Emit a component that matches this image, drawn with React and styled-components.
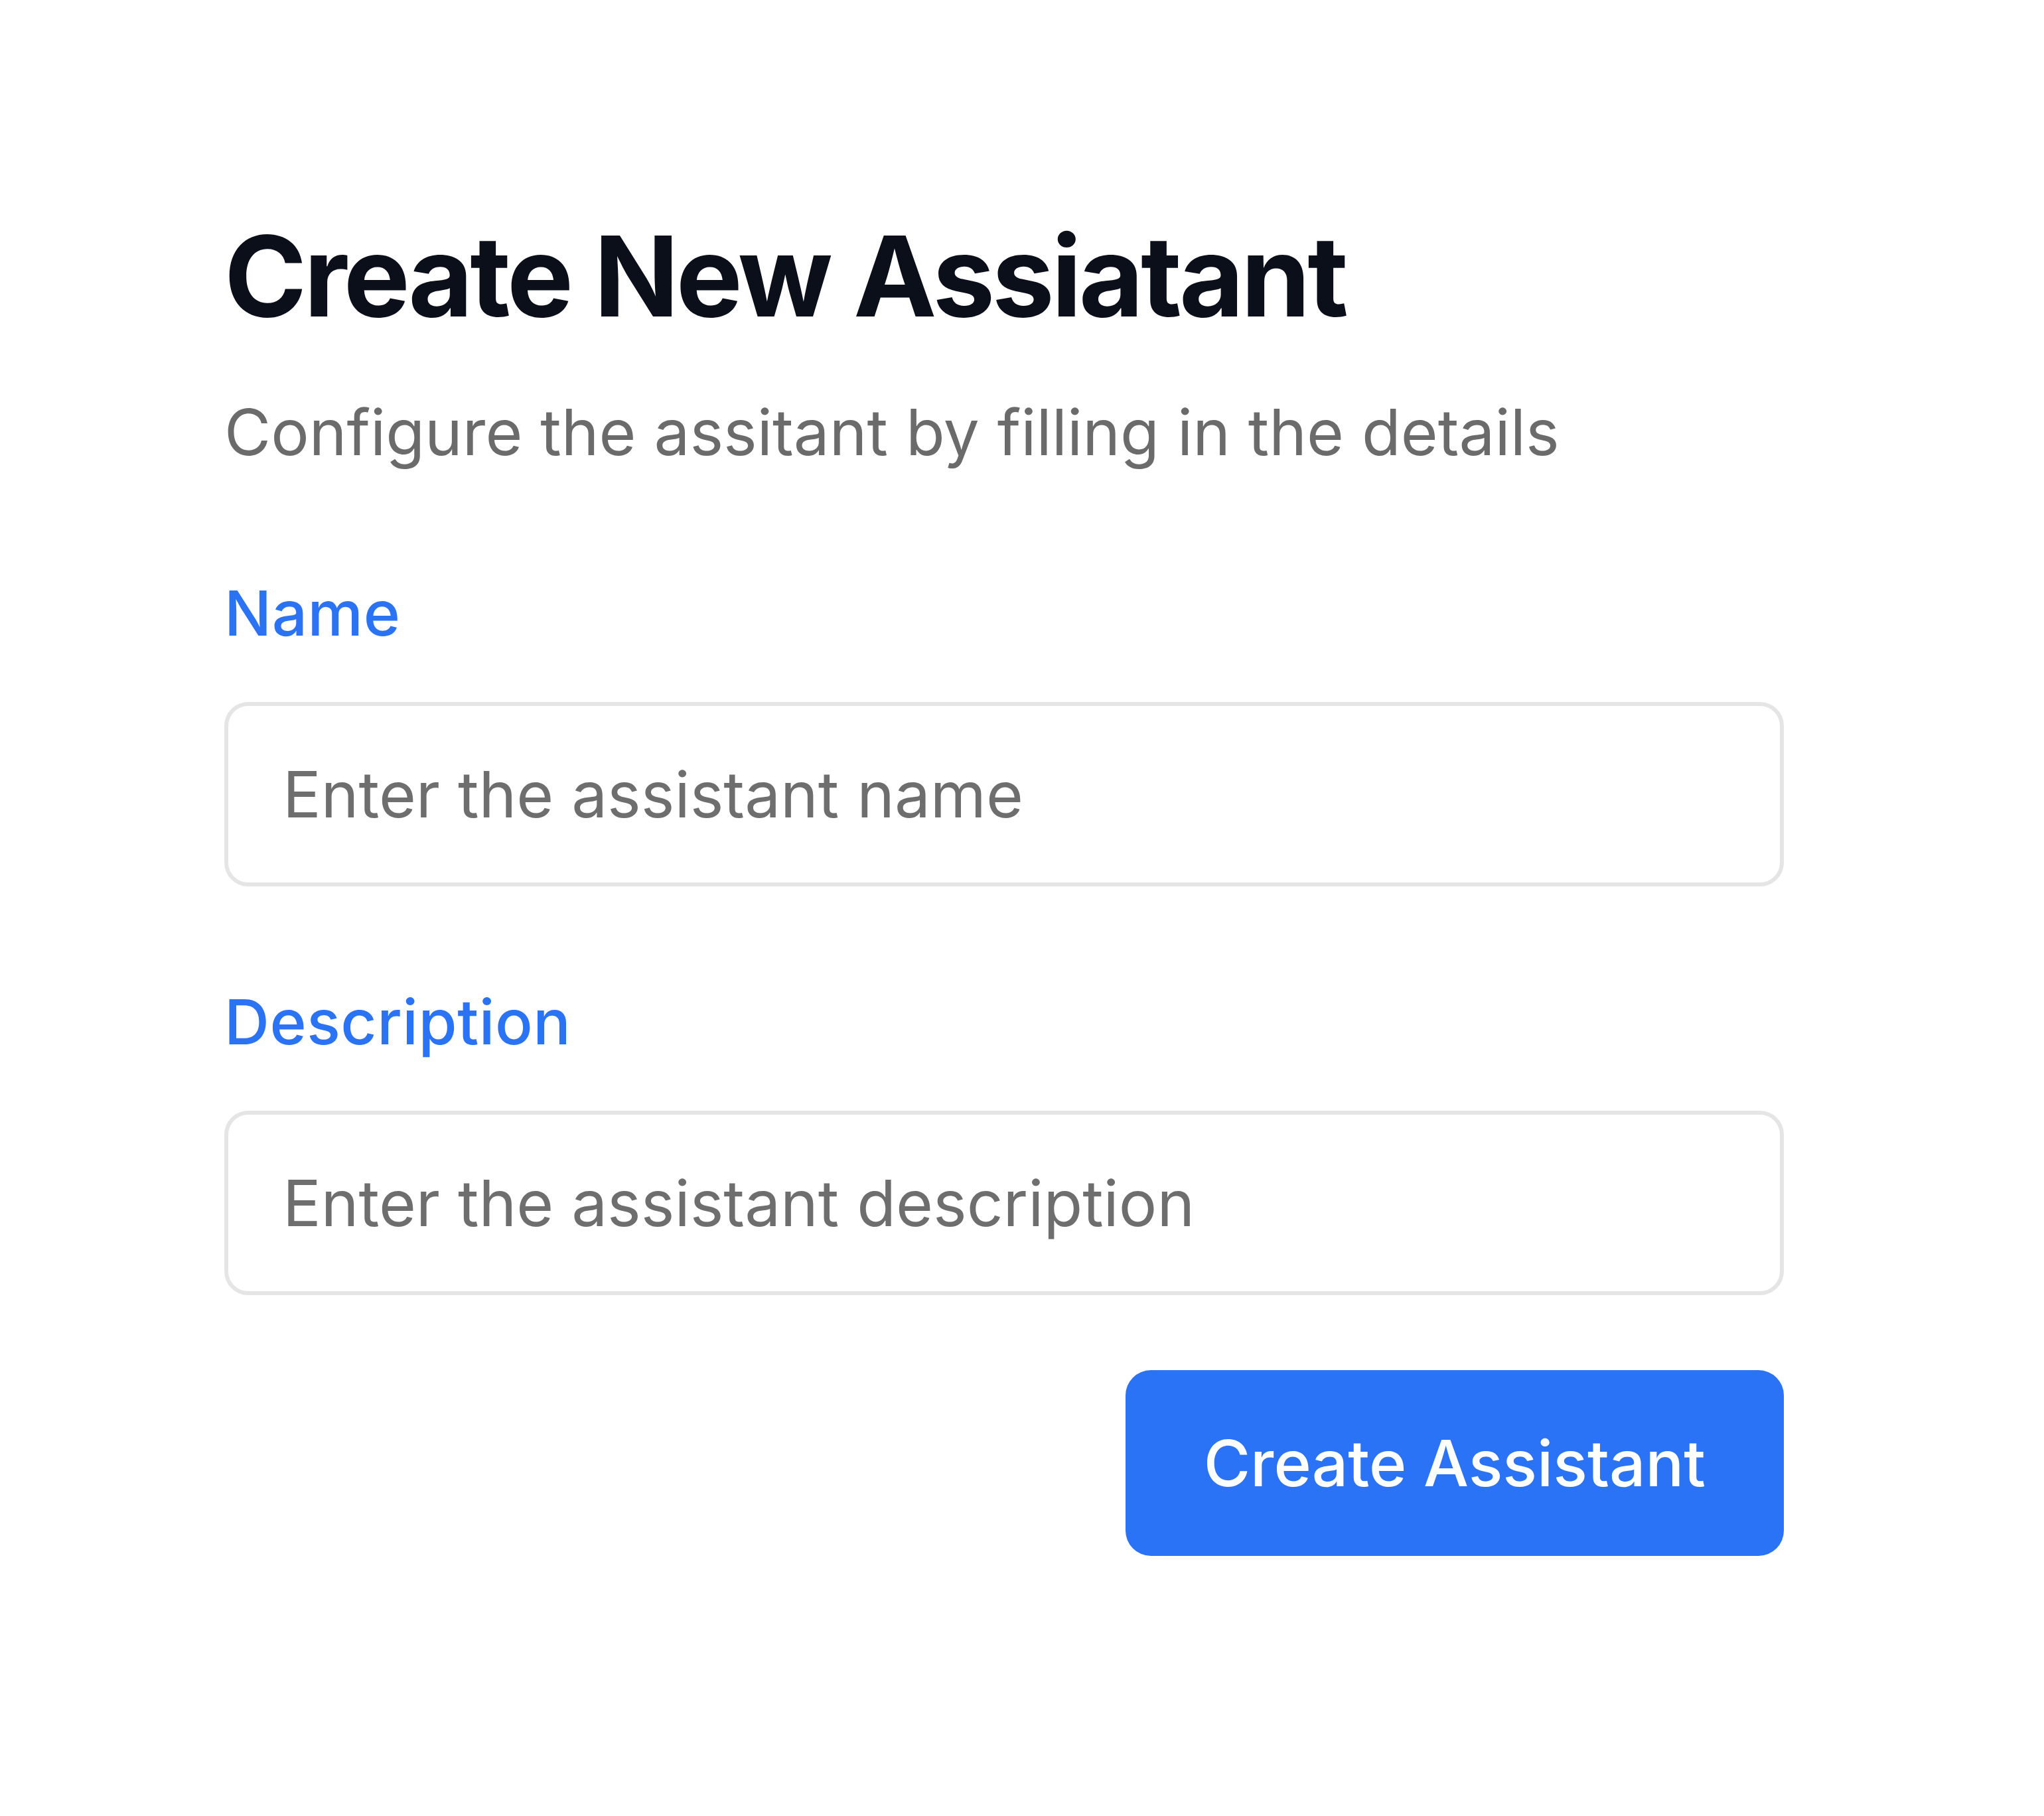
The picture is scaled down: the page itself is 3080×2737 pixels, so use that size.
import React from 'react'
import styled, { createGlobalStyle } from 'styled-components'

const GlobalStyle = createGlobalStyle`
  html, body {
    margin: 0;
    padding: 0;
    background: #ffffff;
  }
  body {
    font-family: Inter, "Noto Sans", "Liberation Sans", sans-serif;
  }
  * {
    box-sizing: border-box;
  }
`

const Page = styled.div`
  min-height: 2737px;
  padding: 332px 0 0 338px;
`

const Form = styled.form`
  width: 2350px;
  display: flex;
  flex-direction: column;
`

const Title = styled.h1`
  margin: 0;
  font-size: 168px;
  line-height: 1;
  font-weight: 700;
  letter-spacing: -0.026em;
  color: #0a0f1a;
`

const Subtitle = styled.p`
  margin: 103px 0 0;
  font-size: 96px;
  line-height: 1;
  font-weight: 400;
  color: #6b6b6b;
`

const Field = styled.div`
  display: flex;
  flex-direction: column;
  gap: 87px;
  margin-top: ${props => props.$top}px;
`

const Label = styled.label`
  font-size: 94px;
  line-height: 1;
  font-weight: 500;
  letter-spacing: 0.006em;
  color: #2a73f5;
`

const Input = styled.input`
  height: 278px;
  width: 100%;
  padding: 0 82px;
  border: 6px solid #e5e5e5;
  border-radius: 36px;
  background: #ffffff;
  font-family: inherit;
  font-size: 96px;
  color: #111;
  outline: none;

  &::placeholder {
    color: #6e6e6e;
  }
`

const Actions = styled.div`
  display: flex;
  justify-content: flex-end;
  margin-top: 113px;
`

const Button = styled.button`
  height: 280px;
  padding: 0 118px;
  border: none;
  border-radius: 38px;
  background: #2b73f6;
  color: #ffffff;
  font-family: inherit;
  font-size: 96px;
  font-weight: 500;
  cursor: pointer;
`

const App = () => {
  return (
    <Page>
      <GlobalStyle />
      <Form onSubmit={ e => e.preventDefault() }>
        <Title>Create New Assiatant</Title>
        <Subtitle>Configure the assitant by filling in the details</Subtitle>

        <Field $top={ 178 }>
          <Label htmlFor="name">Name</Label>
          <Input id="name" placeholder="Enter the assistant name" />
        </Field>

        <Field $top={ 157 }>
          <Label htmlFor="description">Description</Label>
          <Input id="description" placeholder="Enter the assistant description" />
        </Field>

        <Actions>
          <Button type="submit">Create Assistant</Button>
        </Actions>
      </Form>
    </Page>
  )
}

export default App
